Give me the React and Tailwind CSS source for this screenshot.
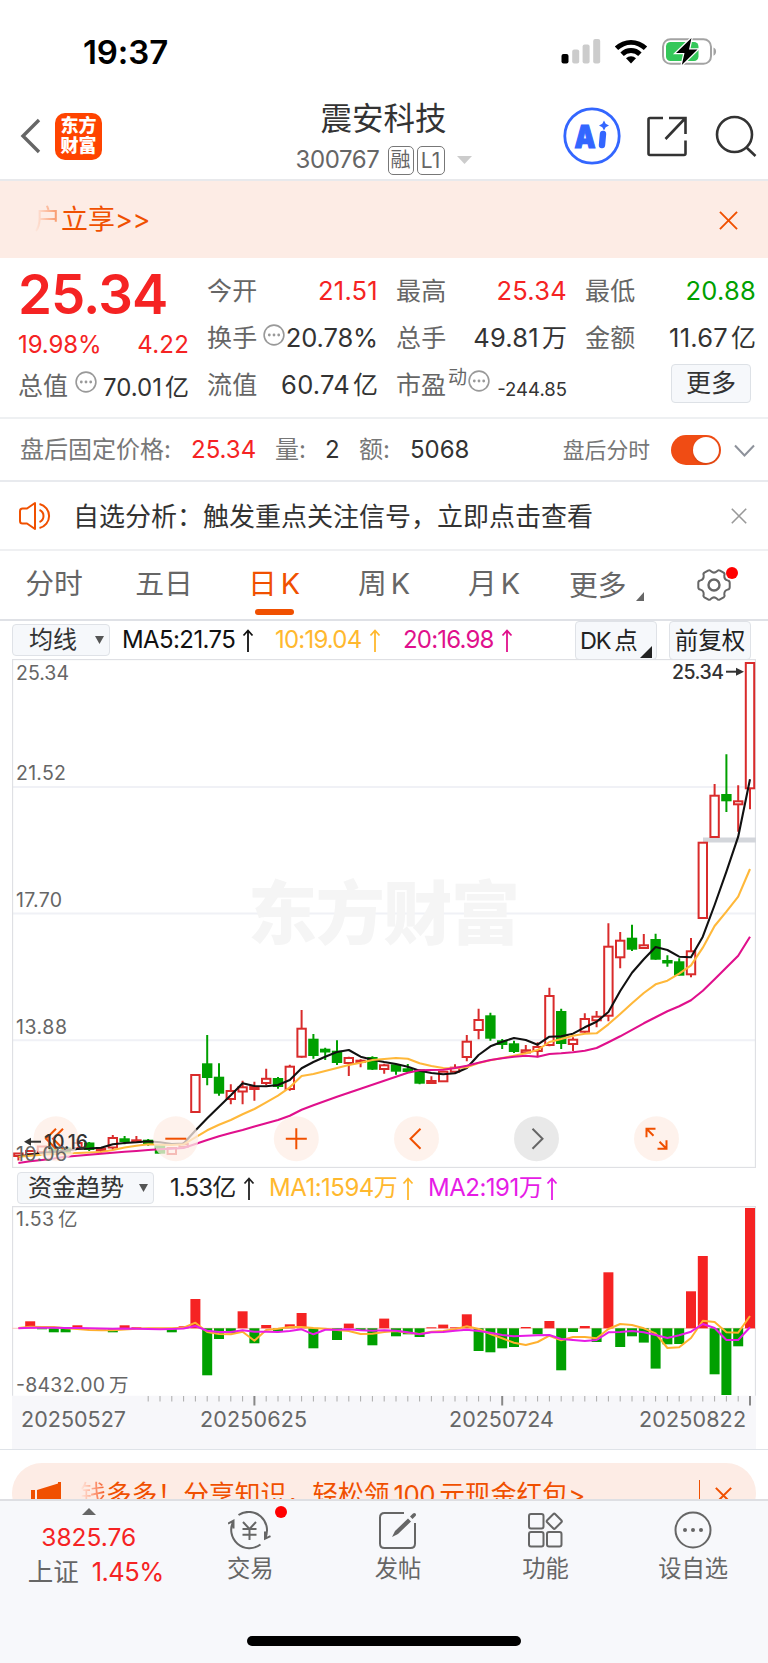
import React, { useState } from "react";

const RED = "#f52323";
const GREEN = "#00a000";

// x of a trading day inside the charts
const dayX = (i) => 6.4 + 11.8 * i;

// [up/down, body top, body bottom, wick top, wick bottom]
const candles = [
  ["u", 1153.5, 1156, 1153, 1160.5], ["u", 1151, 1154, 1150, 1155], ["u", 1146.5, 1152, 1146, 1152],
  ["d", 1147, 1153, 1146, 1154], ["d", 1148.5, 1153, 1147, 1154], ["u", 1143, 1148, 1139, 1150],
  ["d", 1143.5, 1149, 1142, 1151], ["u", 1148.5, 1150.5, 1147, 1153], ["u", 1138, 1147.5, 1135, 1150],
  ["d", 1139.3, 1141, 1136, 1144.3], ["u", 1140.3, 1142, 1136, 1143], ["d", 1140.7, 1143, 1139, 1145.7],
  ["d", 1145, 1152.7, 1145, 1154], ["u", 1148, 1154, 1147, 1154.5], ["u", 1144, 1146.7, 1142, 1147],
  ["u", 1075, 1112, 1074.7, 1112.3], ["d", 1064.3, 1077, 1035, 1085.3], ["d", 1077.7, 1092.7, 1063.3, 1095.7],
  ["u", 1091, 1099, 1084.3, 1104.3], ["u", 1087.3, 1091.5, 1080.7, 1104.3], ["u", 1087, 1089, 1081.7, 1100.7],
  ["u", 1078.8, 1083, 1068.7, 1085.3], ["d", 1079, 1086, 1077, 1088.7], ["u", 1066.7, 1089, 1064.7, 1090.7],
  ["u", 1028.7, 1056.7, 1010, 1057.7], ["d", 1039.7, 1055, 1034, 1058.7], ["d", 1049.7, 1051.5, 1047.7, 1060],
  ["d", 1051.7, 1062, 1040.3, 1065], ["u", 1058, 1063, 1056.7, 1076], ["u", 1060.7, 1062, 1059.3, 1067.3],
  ["d", 1058, 1068.7, 1056.3, 1070], ["u", 1065.3, 1069, 1063.7, 1073.7], ["d", 1065.3, 1070.7, 1064, 1074.7],
  ["d", 1069.3, 1071, 1064, 1073], ["d", 1070.3, 1082.7, 1069, 1084.3], ["u", 1081, 1083, 1076.3, 1084],
  ["u", 1071.7, 1081.3, 1071, 1082], ["u", 1067.7, 1071.7, 1064.3, 1073.3], ["u", 1041.7, 1057, 1035, 1061.3],
  ["u", 1020, 1030, 1008.7, 1039.3], ["d", 1016.3, 1037.7, 1012.7, 1040.7], ["d", 1041.3, 1044, 1039, 1049],
  ["d", 1044.3, 1051, 1040.7, 1053], ["u", 1050.3, 1052.5, 1045, 1053.3], ["u", 1047, 1051, 1042.3, 1057.3],
  ["u", 996, 1045, 987.7, 1046.3], ["d", 1012, 1043, 1008.7, 1049], ["u", 1039.7, 1044, 1037.3, 1051],
  ["u", 1019, 1031.7, 1013.3, 1033.3], ["u", 1016.7, 1020.3, 1011, 1027.3], ["u", 946.7, 1015.7, 923.3, 1021.3],
  ["u", 940.7, 957.3, 932, 968.3], ["d", 938.7, 948.7, 924.7, 951], ["u", 945.3, 948, 934, 949],
  ["d", 940, 958.7, 933.7, 959.7], ["d", 961, 962.5, 955.3, 966.7], ["d", 962.3, 974.7, 958.3, 975.3],
  ["u", 951.3, 974.3, 938, 977.3], ["u", 842.7, 918, 842, 918.7], ["u", 795.7, 837, 784, 837.7],
  ["d", 795, 800.3, 754.3, 812], ["u", 801.3, 804.3, 785.3, 831.7], ["u", 663, 788.3, 662.7, 809.3],
];

const ma5 = [
  1156.5, 1154.7, 1153, 1151.7, 1150.5, 1149, 1148.5, 1147.7, 1144.3, 1143, 1142.3, 1141.3, 1142.3, 1144, 1143.5,
  1130.5, 1118.3, 1106.7, 1095.3, 1083.3, 1086, 1086.3, 1085, 1080, 1068.3, 1062, 1056.7, 1052, 1050, 1056.7,
  1059.7, 1062, 1064, 1066.7, 1070.7, 1073, 1074.3, 1073.3, 1068, 1055, 1046.3, 1041.7, 1038, 1040, 1044.7,
  1036.7, 1036.3, 1033.7, 1027.3, 1021.7, 1012, 991, 972.7, 959.3, 947, 950, 956.7, 957.3, 936.7, 905, 871.7,
  836.7, 779.3,
];
const ma10 = [
  1156.7, 1155.7, 1154.7, 1154, 1153.5, 1153, 1152.5, 1152, 1150, 1147.5, 1145.7, 1144.3, 1144.7, 1145, 1144.3,
  1137.3, 1130.3, 1124.7, 1120, 1114.3, 1109, 1102.3, 1095.7, 1087.3, 1076, 1074, 1071, 1068, 1065, 1062.7, 1060,
  1059, 1058, 1058.7, 1063.3, 1066, 1068, 1068.3, 1067.3, 1063, 1060.3, 1058, 1055.7, 1053.3, 1050, 1042, 1039,
  1035.7, 1033.7, 1033.3, 1024.3, 1014, 1003.3, 993, 984.3, 980.7, 973.7, 965.3, 947.7, 926, 911.7, 896.7, 869,
];
const ma20 = [
  1163, 1161.3, 1160, 1158.5, 1156.7, 1155.7, 1154.7, 1153.7, 1152.8, 1151.8, 1151, 1150, 1149.3, 1148.7, 1148,
  1144, 1140, 1136.3, 1133, 1130, 1126.5, 1123.3, 1120, 1115.7, 1109.7, 1105.3, 1101, 1096.7, 1092.7, 1088.7,
  1084.7, 1080.7, 1076.7, 1072.7, 1070.3, 1070, 1069.7, 1068, 1065.7, 1062.7, 1060, 1058.3, 1056.7, 1055.7,
  1056.7, 1054, 1053.3, 1052.3, 1050.7, 1048, 1042.3, 1036.3, 1029.8, 1023.3, 1017.3, 1011.3, 1006.3, 1000.3,
  990.7, 979.3, 967.5, 955.7, 936.7,
];

// money flow, positive = inflow
const flow = [
  0, 7, -1, -4, -4, 3, 0, -1, -4, 3, 1, 0, -0.5, -4, 2, 29.3, -47, -10.7, -5, 17, -15, 3.3, -3, 4, 15.3, -20, 0,
  -11.7, 4.7, -2, -17, 9.7, -8, -6, -8.7, 1, 3.7, 1, 14, -22.7, -24, -20, -18.7, 1.3, -6, 7.3, -42, -3.7, 2.3,
  -13.7, 56, -18.7, -8, -14.3, -40.3, -16, -15.7, 37, 72.3, -46, -66.7, -18, 120.3,
];
const flowMa1 = [
  1328, 1326.7, 1327, 1327, 1328.3, 1329, 1330, 1330.3, 1330.3, 1329.5, 1328.7, 1328.3, 1328.3, 1328.3, 1327.7,
  1322.7, 1332, 1334, 1334.3, 1331.7, 1340.7, 1330, 1328.7, 1327, 1327, 1328, 1328.7, 1330, 1331, 1334, 1333.7,
  1332, 1331, 1332.7, 1334, 1331.7, 1331, 1329.3, 1326.3, 1329, 1334, 1338.3, 1342.7, 1345, 1342, 1335.7, 1340.3,
  1337, 1337, 1338.3, 1329, 1324, 1325, 1328.3, 1333.3, 1348, 1347.3, 1338, 1320.7, 1322, 1332.3, 1332.7, 1316,
];
const flowMa2 = [
  1328.3, 1327.7, 1327.7, 1327.7, 1328, 1328, 1328.3, 1328.5, 1328.7, 1328.5, 1328.7, 1329, 1329.3, 1329, 1328.5,
  1326, 1330.7, 1332, 1332, 1330.3, 1331.7, 1331.7, 1332, 1331, 1329.3, 1334.3, 1329.7, 1329.7, 1329.3, 1330.3,
  1330.7, 1330.3, 1330.7, 1332.3, 1334.3, 1332.3, 1332, 1330.7, 1329.7, 1331, 1332.7, 1335, 1336.3, 1335.7,
  1335.3, 1335, 1339, 1340, 1341, 1340, 1332.3, 1332, 1331, 1332.3, 1335, 1338, 1335.3, 1331.7, 1324, 1328, 1340,
  1340, 1327.3,
];

const line = (ys, top) => ys.map((y, i) => `${dayX(i).toFixed(1)},${(y - top).toFixed(1)}`).join(" ");

function StatusBar() {
  return (
    <div className="flex h-[98px] items-start justify-between pt-[38px] pl-[83px] pr-[51px]">
      <span className="pt-[1px] text-[33px] leading-[26px] font-semibold text-black tracking-[-0.1px]">19:37</span>
      <div className="flex">
        <svg className="h-[27px] w-[40px]" viewBox="0 0 40 27">
          <rect x="0.5" y="16" width="7" height="9.5" rx="2" fill="#000" />
          <rect x="11.2" y="11.5" width="7" height="14" rx="2" fill="#ccc" />
          <rect x="21.6" y="6.5" width="7" height="19" rx="2" fill="#ccc" />
          <rect x="32.2" y="1" width="7" height="24.5" rx="2" fill="#ccc" />
        </svg>
        <svg className="ml-[13px] h-[27px] w-[34px]" viewBox="0 0 34 27">
          <path d="M0.8 8.6a23 23 0 0 1 32.4 0l-3.4 3.5a18.2 18.2 0 0 0-25.6 0z" />
          <path d="M6.4 14.4a15 15 0 0 1 21.2 0l-3.4 3.5a10.2 10.2 0 0 0-14.4 0z" />
          <path d="M12 20.2a7.2 7.2 0 0 1 10 0l-5 5.2z" />
        </svg>
        <svg className="ml-[14px] h-[27px] w-[55px]" viewBox="0 0 55 27">
          <rect x="1" y="1.2" width="48" height="24.6" rx="7.5" fill="none" stroke="#a3a3a3" strokeWidth="2" />
          <path d="M51.5 9.5c3.4 1.2 3.4 7 0 8.200z" fill="#a3a3a3" />
          <rect x="4" y="4" width="32.500" height="19" rx="4.500" fill="#34c759" />
          <path d="M29.500 0L14 15h8.500L19.800 27L35.500 11.500H27z" fill="#000" stroke="#fff" strokeWidth="2.500" paintOrder="stroke" />
        </svg>
      </div>
    </div>
  );
}

function Header() {
  return (
    <div className="flex h-[83px] items-center border-b-2 border-[#e8e9ec]">
      <div className="flex w-[295px] items-center pb-[5px] pl-[20px]">
        <svg className="h-[36px] w-[22px]" viewBox="0 0 22 36" fill="none" stroke="#666" strokeWidth="3.400">
          <path d="M19 2L3 18l16 16" />
        </svg>
        <div className="ml-[13px] flex h-[47px] w-[47px] flex-col items-center justify-center rounded-[10px] bg-[#ff4400] pb-[1px] text-[18px] leading-[19.500px] font-black text-white">
          <span>东方</span>
          <span>财富</span>
        </div>
      </div>
      <div className="flex w-[177px] flex-col items-center">
        <div className="h-[41px] text-[31.500px] leading-[37px] text-[#333] whitespace-nowrap">震安科技</div>
        <div className="flex h-[36px] items-center pt-[2px] text-[24px] text-[#666]">
          <span className="w-[92px] tracking-[-0.4px]">300767</span>
          <span className="flex h-[29px] w-[26px] items-center justify-center rounded-[5px] border-[1.500px] border-[#777] text-[20px] leading-none">融</span>
          <span className="ml-[3px] flex h-[29px] w-[28px] items-center justify-center rounded-[5px] border-[1.500px] border-[#777] text-[21px] leading-none">L1</span>
          <svg className="ml-[12px] h-[8px] w-[15px]" viewBox="0 0 15 8">
            <path d="M0 0h15l-7.500 8z" fill="#ccc" />
          </svg>
        </div>
      </div>
      <div className="flex flex-1 items-center justify-end pr-[11px] pb-[6px]">
        <svg className="h-[58px] w-[58px]" viewBox="0 0 58 58">
          <circle cx="29" cy="29" r="27.200" fill="none" stroke="#3366ff" strokeWidth="2.800" />
          <text x="11.500" y="40.500" fontSize="31" fontWeight="900" fill="#3366ff" stroke="#3366ff" strokeWidth="1.200" textLength="21" lengthAdjust="spacingAndGlyphs">A</text>
          <path d="M40 27L39 38" stroke="#3366ff" strokeWidth="6.400" strokeLinecap="round" />
          <path d="M41 13.500l1.700 3.300 3.300 1.700-3.300 1.700-1.700 3.300-1.700-3.300-3.300-1.700 3.300-1.700z" fill="#3366ff" />
        </svg>
        <svg className="ml-[25px] h-[42px] w-[42px]" viewBox="0 0 42 42" fill="none" stroke="#333" strokeWidth="2.600">
          <path d="M17 3H4q-1.500 0-1.500 1.500v34q0 1.500 1.500 1.500h34q1.500 0 1.500-1.500V25.500M23 3h16.500v16M39 3.500L19.500 24" />
        </svg>
        <svg className="ml-[27px] h-[42px] w-[42px]" viewBox="0 0 42 42" fill="none" stroke="#333" strokeWidth="2.600">
          <circle cx="19.500" cy="19.500" r="17.500" />
          <path d="M31 32l9.500 9" />
        </svg>
      </div>
    </div>
  );
}

function Close({ className, color, width = 2 }) {
  return (
    <svg className={className} viewBox="0 0 20 20" fill="none" stroke={color} strokeWidth={width}>
      <path d="M1 1l18 18M19 1L1 19" />
    </svg>
  );
}

function Dots({ className }) {
  return (
    <svg className={className} viewBox="0 0 22 22">
      <circle cx="11" cy="11" r="9.900" fill="none" stroke="#999" strokeWidth="1.600" />
      <circle cx="6.300" cy="11" r="1.400" fill="#999" />
      <circle cx="11" cy="11" r="1.400" fill="#999" />
      <circle cx="15.700" cy="11" r="1.400" fill="#999" />
    </svg>
  );
}

function Quote({ label, value, unit, color = "text-[#333]", dots }) {
  return (
    <div className="flex h-[47px] items-center justify-between whitespace-nowrap">
      <span className="flex items-center text-[25px] tracking-[0.2px] text-[#666]">
        {label}
        {dots && <Dots className="mb-[8px] ml-[6px] h-[22px] w-[22px]" />}
      </span>
      <span className={`text-[25.500px] ${dots ? "tracking-[-0.1px]" : "tracking-[0.25px]"} ${color}`}>
        {value}
        {unit && <span className="ml-[3px] text-[25px] tracking-normal">{unit}</span>}
      </span>
    </div>
  );
}

function Quotes() {
  return (
    <div className="grid h-[161px] grid-cols-[171px_171px_171px_171px] gap-x-[18px] border-b-2 border-[#eef0f2] pt-[10px] pl-[18px]">
      <div className="whitespace-nowrap text-[#f52323]">
        <div className="h-[57px] text-[54.500px] leading-[53px] font-semibold tracking-[-0.9px]">25.34</div>
        <div className="flex h-[38px] items-center justify-between pt-[1px] text-[24px]">
          <span className="tracking-[-0.1px]">19.98%</span>
          <span className="tracking-[0.2px]">4.22</span>
        </div>
        <div className="flex h-[47px] items-center justify-between">
          <span className="flex items-center text-[25px] text-[#666]">
            总值
            <Dots className="mb-[9px] ml-[7px] h-[22px] w-[22px]" />
          </span>
          <span className="pt-[3px] text-[24px] text-[#333]">
            70.01<span className="ml-[3px]">亿</span>
          </span>
        </div>
      </div>
      <div>
        <Quote label="今开" value="21.51" color="text-[#f52323]" />
        <Quote label="换手" value="20.78%" dots />
        <Quote label="流值" value="60.74" unit="亿" />
      </div>
      <div>
        <Quote label="最高" value="25.34" color="text-[#f52323]" />
        <Quote label="总手" value="49.81" unit="万" />
        <div className="flex h-[47px] items-center justify-between whitespace-nowrap">
          <span className="flex items-center text-[25px] text-[#666]">
            市盈
            <span className="mb-[14px] ml-[2px] text-[19px]">动</span>
            <Dots className="mb-[9px] ml-[1px] h-[22px] w-[22px]" />
          </span>
          <span className="pt-[9px] text-[18.500px] text-[#333]">-244.85</span>
        </div>
      </div>
      <div>
        <Quote label="最低" value="20.88" color="text-[#00a000]" />
        <Quote label="金额" value="11.67" unit="亿" />
        <div className="flex justify-end pt-[2px] pr-[5px]">
          <button className="h-[39px] w-[80px] rounded-[4px] border-[1.500px] border-[#dde1e6] bg-[#f6f8fb] text-[25px] leading-[37px] text-[#333]">更多</button>
        </div>
      </div>
    </div>
  );
}

function AfterHours() {
  const [on, setOn] = useState(true);
  return (
    <div className="flex h-[63px] items-center border-b-2 border-[#e8eaee] pt-[1px] pl-[20px] text-[24px] whitespace-nowrap text-[#333]">
      <span className="w-[171px] text-[24px] text-[#777]">盘后固定价格:</span>
      <span className="w-[84px] text-[#f52323]">25.34</span>
      <span className="w-[50px] text-[#777]">量:</span>
      <span className="w-[34px]">2</span>
      <span className="w-[51px] text-[#777]">额:</span>
      <span>5068</span>
      <span className="ml-auto text-[21.800px] text-[#777]">盘后分时</span>
      <button
        onClick={() => setOn(!on)}
        className={`ml-[21px] flex h-[30px] w-[50px] items-center rounded-full p-[2px] ${on ? "justify-end bg-[#f04c14]" : "justify-start bg-gray-300"}`}
      >
        <span className="h-[26px] w-[26px] rounded-full bg-white shadow" />
      </button>
      <svg className="mr-[13px] ml-[13px] h-[13px] w-[21px]" viewBox="0 0 21 13" fill="none" stroke="#8e929b" strokeWidth="2">
        <path d="M1 1.500l9.500 10L20 1.500" />
      </svg>
    </div>
  );
}

function Analysis() {
  return (
    <div className="flex h-[69px] items-center border-b-2 border-[#eff0f2] pl-[19px] text-[#333]">
      <svg className="h-[30px] w-[34px]" viewBox="0 0 34 30" fill="none" stroke="#f05000" strokeWidth="2">
        <path d="M16 2v26L8 22.500H3.500Q1 22.500 1 20V10q0-2.500 2.500-2.500H8z" strokeLinejoin="round" />
        <path d="M20.500 9a6.500 6.500 0 0 1 0 12M20.500 3a12.300 12.300 0 0 1 0 24" />
      </svg>
      <span className="ml-[20px] pt-[1px] text-[26px] whitespace-nowrap">自选分析：触发重点关注信号，立即点击查看</span>
      <Close className="mr-[21px] ml-auto h-[16px] w-[16px]" color="#999" />
    </div>
  );
}

function Tabs() {
  const [active, setActive] = useState(2);
  const tabs = ["分时", "五日", "日 K", "周 K", "月 K"];
  return (
    <div className="flex h-[70px] border-b-2 border-[#dfe1e6] text-[28.800px] text-[#666]">
      {tabs.map((tab, i) => (
        <button
          key={tab}
          onClick={() => setActive(i)}
          className={`flex w-[110px] flex-col items-center pr-[2px] whitespace-nowrap [word-spacing:-4px] ${i === active ? "text-[#f05000]" : ""}`}
        >
          <span className="flex h-[58px] items-end pt-[7px] leading-[51px]">{tab}</span>
          {i === active && <span className="h-[6px] w-[39px] rounded-full bg-[#f05000]" />}
        </button>
      ))}
      <div className="flex w-[110px] items-center pt-[2px] pl-[19px]">
        更多
        <svg className="mt-[20px] ml-[9px] h-[9px] w-[8px]" viewBox="0 0 8 9">
          <path d="M8 0v9H0z" fill="#666" />
        </svg>
      </div>
      <div className="relative mt-[17px] ml-[37px] h-[34px] w-[34px]">
        <svg className="h-[34px] w-[34px]" viewBox="0 0 34 34" fill="none" stroke="#666" strokeWidth="2">
          <path
            d="M11 2.600q1.800-1.100 3 .7 3 2.600 6 0 1.200-1.800 3-.7l3.600 2.100q1.500 1 .7 2.800-.2 4 3.400 4.900 2 .3 2 2.300v4.600q0 2-2 2.300-3.600.9-3.400 4.900.8 1.800-.7 2.800L23 31.400q-1.800 1.100-3-.7-3-2.600-6 0-1.200 1.800-3 .7l-3.600-2.100q-1.500-1-.7-2.800.2-4-3.400-4.900-2-.3-2-2.300v-4.600q0-2 2-2.300 3.600-.9 3.400-4.900-.8-1.800.7-2.800z"
            strokeLinejoin="round"
          />
          <circle cx="17" cy="17" r="5.500" strokeWidth="2.400" />
        </svg>
        <span className="absolute -top-[1px] left-[29px] h-[12px] w-[12px] rounded-full bg-[#ff0000]" />
      </div>
    </div>
  );
}

function DropArrow({ className }) {
  return (
    <svg className={className} viewBox="0 0 9 8">
      <path d="M0 0h9L4.500 8z" fill="#555" />
    </svg>
  );
}

function Up({ className }) {
  return (
    <svg className={className} viewBox="0 0 12 23" fill="none" stroke="currentColor" strokeWidth="1.800">
      <path d="M6 23V1.500M1.500 6.500L6 1.500l4.500 5" />
    </svg>
  );
}

function MaRow() {
  return (
    <div className="flex h-[38px] items-start pl-[12px] text-[24px] whitespace-nowrap text-[#111]">
      <div className="mt-[3px] flex h-[32px] w-[98px] items-center rounded-[4px] border-[1.500px] border-[#dfe2e7] bg-[#f6f8fb] pl-[16px] text-[24px] text-[#333]">
        均线
        <DropArrow className="ml-[18px] h-[8px] w-[9px]" />
      </div>
      <div className="flex h-[38px] items-center tracking-[-0.6px]">
        <span className="ml-[12px] w-[120px]">MA5:21.75</span>
        <Up className="h-[23px] w-[12px]" />
        <span className="ml-[21px] w-[94px] tracking-[-0.8px] text-[#ffb82e]">10:19.04</span>
        <Up className="h-[23px] w-[12px] text-[#ffb82e]" />
        <span className="ml-[22px] w-[98px] tracking-[-0.8px] text-[#e0108c]">20:16.98</span>
        <Up className="h-[23px] w-[12px] text-[#e0108c]" />
      </div>
      <div className="ml-auto flex h-[39px] w-[82px] items-center rounded-[4px] border-[1.500px] border-[#dfe2e7] bg-[#f6f8fb] pl-[4px] text-[23.500px] text-[#222]">
        <span className="tracking-[-1.2px]">DK</span>
        <span className="ml-[4px]">点</span>
        <svg className="mt-[22px] ml-[2px] h-[12px] w-[12px] shrink-0" viewBox="0 0 12 12">
          <path d="M12 0v12H0z" fill="#222" />
        </svg>
      </div>
      <div className="mr-[17px] ml-[12px] flex h-[39px] w-[82px] items-center justify-center rounded-[4px] border-[1.500px] border-[#dfe2e7] bg-[#f6f8fb] text-[23.500px] text-[#222]">
        前复权
      </div>
    </div>
  );
}

function RoundButton({ x, gray, children }) {
  return (
    <g transform={`translate(${x} 479.700)`} fill="none" stroke={gray ? "#666" : "#f05000"} strokeWidth="2">
      <circle r="22.500" fill={gray ? "#e2e2e2" : "#fdeee6"} fillOpacity="0.750" stroke="none" />
      {children}
    </g>
  );
}

function KChart() {
  const top = 659;
  return (
    <svg className="ml-[12px] block h-[509px] w-[744px]" viewBox="0 0 744 509">
      <path d="M0 128h744M0 254.500h744M0 381.300h744" stroke="#f0f1f6" strokeWidth="2" />
      <text x="236" y="280" fontSize="69" fontWeight="900" fill="#f5f5f5" textLength="272">东方财富</text>
      <rect x="0.500" y="0.500" width="743" height="508" fill="none" stroke="#dfe0e4" strokeWidth="1.300" />
      <rect x="691" y="178.500" width="53" height="5" fill="#d3d6db" />
      <g fontSize="19.500" fill="#666">
        <text x="4" y="21" textLength="53">25.34</text>
        <text x="4" y="121" textLength="50">21.52</text>
        <text x="4" y="247.500" textLength="46">17.70</text>
        <text x="4" y="374.500" textLength="51">13.88</text>
      </g>
      {candles.map(([dir, bodyTop, bodyBottom, high, low], i) => {
        const x = dayX(i);
        const color = dir === "u" ? "#d92b2b" : GREEN;
        return (
          <g key={i} stroke={color} strokeWidth="2">
            <path d={`M${x} ${high - top}V${bodyTop - top}M${x} ${bodyBottom - top}V${low - top}`} />
            <rect
              x={x - 4.2}
              y={bodyTop - top}
              width="8.400"
              height={bodyBottom - bodyTop}
              fill={dir === "u" ? "#fff" : GREEN}
            />
          </g>
        );
      })}
      <g fill="none" strokeWidth="2.100" strokeLinejoin="round">
        <polyline points={line(ma5, top)} stroke="#111" />
        <polyline points={line(ma10, top)} stroke="#ffb83a" />
        <polyline points={line(ma20, top)} stroke="#e0108c" />
      </g>
      <text x="660" y="20" fontSize="19.500" fontWeight="500" fill="#333" textLength="52">25.34</text>
      <path d="M714 12.700h11" stroke="#333" strokeWidth="2" />
      <path d="M724 8.700l8 4-8 4z" fill="#333" />
      <RoundButton x={44}>
        <path d="M0-10L-10 0L0 10M7-10L-3 0L7 10" />
      </RoundButton>
      <path d="M15 482.700h14" stroke="#333" strokeWidth="2" />
      <path d="M19 478.700l-7 4 7 4z" fill="#333" />
      <text x="32" y="489.500" fontSize="19.500" fontWeight="500" fill="#333" textLength="44">10.16</text>
      <text x="4" y="501.500" fontSize="19.500" fill="#666" textLength="51">10.06</text>
      <RoundButton x={163.800}>
        <path d="M-10.500 0h21" />
      </RoundButton>
      <RoundButton x={284.300}>
        <path d="M-10.500 0h21M0-10.500v21" />
      </RoundButton>
      <RoundButton x={404.500}>
        <path d="M4-10L-6 0L4 10" />
      </RoundButton>
      <RoundButton x={524.500} gray>
        <path d="M-4-10L6 0L-4 10" />
      </RoundButton>
      <RoundButton x={644.500}>
        <path d="M-10-1.500V-10H-1M-10-10L-3-3M1 10h9V1.500M10 10L3 3" />
      </RoundButton>
    </svg>
  );
}

function FlowRow() {
  return (
    <div className="flex h-[38px] items-start pt-[4px] pl-[17px] text-[24px] whitespace-nowrap text-[#222]">
      <div className="flex h-[32px] w-[137px] items-center rounded-[4px] border-[1.500px] border-[#dfe2e7] bg-[#f6f8fb] pl-[10px] text-[24px] text-[#333]">
        资金趋势
        <DropArrow className="ml-[15px] h-[8px] w-[9px]" />
      </div>
      <div className="flex h-[32px] items-center tracking-[-0.9px]">
        <span className="ml-[16px] w-[73px]">1.53亿</span>
        <Up className="h-[23px] w-[12px]" />
        <span className="ml-[14px] w-[133px] tracking-[-0.5px] text-[#ffb82e]">MA1:1594万</span>
        <Up className="h-[23px] w-[12px] text-[#ffb82e]" />
        <span className="ml-[14px] w-[118px] tracking-[-0.5px] text-[#e61ce6]">MA2:191万</span>
        <Up className="h-[23px] w-[12px] text-[#e61ce6]" />
      </div>
    </div>
  );
}

function FlowChart() {
  const top = 1206;
  const zero = 1328.3 - top;
  return (
    <svg className="ml-[12px] block h-[243px] w-[744px]" viewBox="0 0 744 243">
      <path d="M0.500 190V0.700H743.500V190" fill="none" stroke="#dfe0e4" strokeWidth="1.300" />
      <rect y="189.700" width="744" height="54" fill="#f7f7fa" />
      <path d={`M0 ${zero}h744`} stroke="#f8c8c0" strokeWidth="1" />
      {flow.map((v, i) => (
        <rect
          key={i}
          x={dayX(i) - 5}
          y={v > 0 ? zero - v : zero}
          width="10"
          height={Math.abs(v)}
          fill={v > 0 ? RED : GREEN}
        />
      ))}
      <g fill="none" strokeWidth="2" strokeLinejoin="round">
        <polyline points={line(flowMa1, top)} stroke="#ffb02e" />
        <polyline points={line(flowMa2, top)} stroke="#e61ce6" />
      </g>
      {flow.map((v, i) => {
        if (i < 11) return null;
        const major = i === 20 || i === 41 || i === 62;
        return (
          <path
            key={i}
            d={`M${dayX(i)} 190v${major ? 9.5 : 5.5}`}
            stroke={major ? "#888" : "#aaa"}
            strokeWidth={major ? 2 : 1}
          />
        );
      })}
      <g fontSize="19.500" fill="#666">
        <text x="4" y="20" textLength="38">1.53</text>
        <text x="46" y="20">亿</text>
        <text x="4" y="185.500" textLength="89">-8432.00</text>
        <text x="97" y="185.500">万</text>
      </g>
      <g fontSize="21.500" fill="#666">
        <text x="9" y="220.500" textLength="105">20250527</text>
        <text x="188" y="220.500" textLength="107">20250625</text>
        <text x="437" y="220.500" textLength="105">20250724</text>
        <text x="627" y="220.500" textLength="107">20250822</text>
      </g>
    </svg>
  );
}

function Promo() {
  return (
    <div className="h-[50px] overflow-hidden border-t border-[#dfe3e8] px-[12px] pt-[13px]">
      <div className="flex h-[60px] items-start rounded-[30px] bg-[#fdece5] pt-[17px] pl-[19px] text-[#f05000]">
        <svg className="mt-[2px] h-[30px] w-[31px]" viewBox="0 0 31 30" fill="#f05000">
          <path d="M0 8h4v20H0zM6 8L27 1.500V0h3v30H6z" />
        </svg>
        <span className="ml-[18px] flex text-[25.800px] leading-[30px] whitespace-nowrap">
          <span className="bg-gradient-to-r from-[#fdece5] to-[#f05000] bg-clip-text text-transparent">钱</span>
          多多！分享知识，轻松领
          <span className="mx-[4px] tracking-[-0.5px]">100</span>
          元现金红包&gt;
        </span>
        <span className="ml-auto h-[40px] w-[1.500px] bg-[#f05000]" />
        <Close className="mt-[7px] mr-[24px] ml-[15px] h-[17px] w-[17px]" color="#f05000" width={2.4} />
      </div>
    </div>
  );
}

const navIcons = {
  交易: (
    <>
      <path d="M10.500 4A18.300 18.300 0 0 1 37 27.500M37 20.500v7.200l5.500-2.500M32.500 33.500A18.300 18.300 0 0 1 5.500 10M5.500 17.500V9.700L0 12.500" />
      <path d="M15 11l6.500 7 6.500-7M21.500 18V29M14.500 18h14M14.500 23.800h14" />
    </>
  ),
  发帖: (
    <>
      <path d="M28 2H8.500Q4 2 4 6.500v26Q4 37 8.500 37h26q4.500 0 4.500-4.500V12" />
      <path d="M16 26l3-6L32 7.500l3 3L22 23zM34 5.500l3-3q1.500-1 2.500 0t0 2.500l-3 3z" fill="#666" stroke="none" />
    </>
  ),
  功能: (
    <>
      <rect x="5" y="3" width="14.500" height="14.500" rx="2" />
      <rect x="5" y="21" width="14.500" height="14.500" rx="2" />
      <rect x="23" y="21" width="14.500" height="14.500" rx="2" />
      <rect x="24.500" y="4.500" width="11.500" height="11.500" rx="1.500" transform="rotate(45 30.250 10.250)" />
    </>
  ),
  设自选: (
    <>
      <circle cx="22" cy="19" r="17.500" />
      <g fill="#666" stroke="none">
        <circle cx="14" cy="19" r="2" />
        <circle cx="22" cy="19" r="2" />
        <circle cx="30" cy="19" r="2" />
      </g>
    </>
  ),
};

function BottomNav() {
  return (
    <div className="flex h-[165px] flex-col border-t-2 border-[#dedfe3] bg-[#f7f8fb]">
      <div className="flex h-[135px] whitespace-nowrap">
        <div className="flex w-[178px] flex-col items-center pt-[7px]">
          <svg className="h-[7px] w-[14px]" viewBox="0 0 14 7">
            <path d="M0 7l7-7 7 7z" fill="#666" />
          </svg>
          <span className="mt-[5px] h-[35px] text-[24.500px] leading-[34px] text-[#f52323]">3825.76</span>
          <span className="flex h-[34px] items-center pl-[14px] text-[25.500px]">
            <span className="text-[#666]">上证</span>
            <span className="ml-[13px] tracking-[-0.5px] text-[#f52323]">1.45%</span>
          </span>
        </div>
        {Object.keys(navIcons).map((name) => (
          <div key={name} className="relative flex w-[148px] flex-col items-center pt-[10px] pr-[2px]">
            <svg className="h-[40px] w-[44px]" viewBox="0 0 44 40" fill="none" stroke="#666" strokeWidth="2">
              {navIcons[name]}
            </svg>
            <span className="mt-[1px] text-[23.300px] leading-[34px] text-[#666]">{name}</span>
            {name === "交易" && <span className="absolute top-[5px] left-[97px] h-[12px] w-[12px] rounded-full bg-[#ff0000]" />}
          </div>
        ))}
      </div>
      <div className="mx-auto h-[10px] w-[274px] rounded-full bg-black" />
    </div>
  );
}

function App() {
  return (
    <div className="h-[1663px] w-[768px] overflow-hidden bg-white font-['Inter','Noto_Sans_CJK_SC',sans-serif]">
      <StatusBar />
      <Header />
      <div className="flex h-[77px] items-center bg-[#fdece5] pt-[1px] pl-[34px] text-[27px] text-[#f05000]">
        <span className="bg-gradient-to-r from-[#fdece5] to-[#f58a55] bg-clip-text text-transparent">户</span>
        <span>立享</span>
        <span className="tracking-[-0.3px]">&gt;&gt;</span>
        <Close className="mr-[30px] ml-auto h-[19px] w-[19px]" color="#f05000" />
      </div>
      <Quotes />
      <AfterHours />
      <Analysis />
      <Tabs />
      <MaRow />
      <KChart />
      <FlowRow />
      <FlowChart />
      <Promo />
      <BottomNav />
    </div>
  );
}

export default App;
